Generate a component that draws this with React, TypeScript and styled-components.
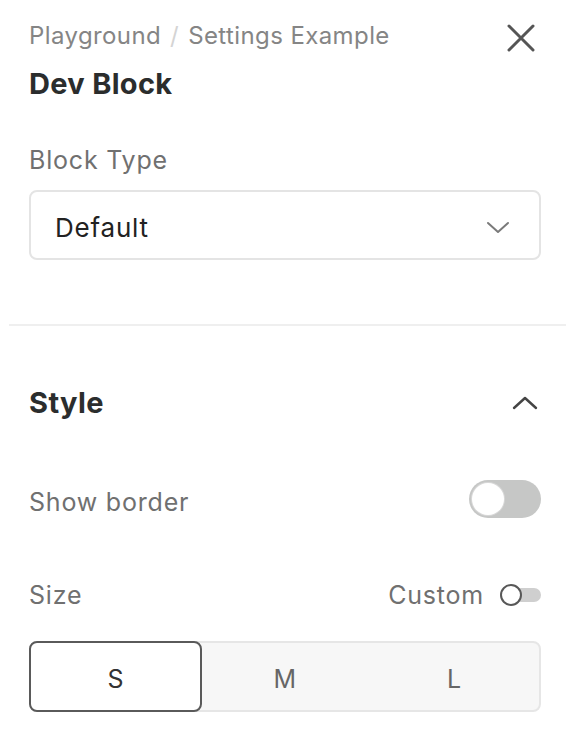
import React from "react";
import styled, { createGlobalStyle } from "styled-components";

const GlobalStyle = createGlobalStyle`
  html, body {
    margin: 0;
    padding: 0;
    background: #ffffff;
  }
  body {
    font-family: Inter, "Noto Sans", "Liberation Sans", sans-serif;
    -webkit-font-smoothing: antialiased;
  }
  * { box-sizing: border-box; }
`;

const Panel = styled.div`
  width: 566px;
  display: flex;
  flex-direction: column;
  padding: 21px 25px 36px 29px;
`;

const Header = styled.div`
  display: flex;
  justify-content: space-between;
  align-items: flex-start;
`;

const Breadcrumb = styled.div`
  display: flex;
  align-items: center;
  font-size: 24px;
  line-height: 30px;
  color: #858585;
  letter-spacing: 0.4px;
`;

const Slash = styled.span`
  color: #d4d4d4;
  margin: 0 9px;
`;

const CloseButton = styled.button`
  border: none;
  background: none;
  padding: 0;
  margin: 2px 5px 0 0;
  width: 30px;
  height: 30px;
  display: flex;
  align-items: center;
  justify-content: center;
  color: #555;
  cursor: pointer;
`;

const Title = styled.h1`
  margin: 14px 0 0;
  font-size: 29px;
  line-height: 34px;
  font-weight: 700;
  color: #2b2d2d;
  letter-spacing: 0.3px;
`;

const Field = styled.div`
  display: flex;
  flex-direction: column;
  margin-top: 44px;
`;

const Label = styled.span`
  font-size: 25px;
  line-height: 30px;
  color: #707070;
  letter-spacing: 0.8px;
`;

const RowLabel = styled(Label)`
  padding-top: 5px;
`;

const Select = styled.div`
  margin-top: 15px;
  height: 70px;
  border: 2px solid #e4e4e4;
  border-radius: 8px;
  display: flex;
  align-items: center;
  justify-content: space-between;
  padding: 5px 29px 0 24px;
  font-size: 26px;
  color: #222;
  letter-spacing: 0.8px;
`;

const Divider = styled.hr`
  border: none;
  height: 2px;
  background: #efefef;
  margin: 64px -25px 0 -20px;
`;

const SectionHeader = styled.div`
  display: flex;
  justify-content: space-between;
  align-items: center;
  margin-top: 60px;
`;

const SectionTitle = styled.h2`
  margin: 0;
  font-size: 29px;
  line-height: 34px;
  font-weight: 700;
  color: #2b2d2d;
  letter-spacing: 0.4px;
`;

const CollapseIcon = styled.span`
  display: flex;
  margin-right: 3px;
`;

const Row = styled.div<{ $gap: number }>`
  display: flex;
  justify-content: space-between;
  align-items: center;
  margin-top: ${(p) => p.$gap}px;
`;

const RowEnd = styled.div`
  display: flex;
  align-items: center;
  gap: 16px;
`;

const Switch = styled.div`
  width: 72px;
  height: 38px;
  border-radius: 19px;
  background: #c6c7c6;
  padding: 3px;
  display: flex;
  align-items: center;
`;

const Knob = styled.div`
  width: 32px;
  height: 32px;
  border-radius: 50%;
  background: #fff;
  box-shadow: 0 0 0 1px #d8d8d8;
`;

const MiniSwitch = styled.div`
  position: relative;
  width: 41px;
  height: 22px;
  display: flex;
  align-items: center;
`;

const MiniTrack = styled.div`
  margin-left: 10px;
  width: 31px;
  height: 14px;
  border-radius: 7px;
  background: #cfcfcf;
`;

const MiniKnob = styled.div`
  position: absolute;
  left: 0;
  top: 0;
  width: 22px;
  height: 22px;
  border-radius: 50%;
  background: #fff;
  border: 2px solid #585858;
`;

const Segmented = styled.div`
  margin-top: 31px;
  height: 71px;
  display: grid;
  grid-template-columns: repeat(3, 1fr);
  border: 2px solid #e6e6e6;
  border-radius: 8px;
  background: #f7f7f7;
`;

const Segment = styled.button<{ $active?: boolean }>`
  font-family: inherit;
  font-size: 25px;
  letter-spacing: 0.5px;
  color: ${(p) => (p.$active ? "#333" : "#666")};
  background: ${(p) => (p.$active ? "#fff" : "transparent")};
  border: ${(p) => (p.$active ? "2px solid #5a5a5a" : "none")};
  border-radius: 8px;
  margin: ${(p) => (p.$active ? "-2px -2px -2px -2px" : "0")};
  padding: 4px 0 0;
  display: flex;
  align-items: center;
  justify-content: center;
  cursor: pointer;
`;

const ChevronDown = () => (
  <svg width="24" height="14" viewBox="0 0 24 14" fill="none">
    <path d="M2 2 L12 11 L22 2" stroke="#7a7a7a" strokeWidth="2" strokeLinecap="round" strokeLinejoin="round" />
  </svg>
);

const ChevronUp = () => (
  <svg width="26" height="16" viewBox="0 0 26 16" fill="none">
    <path d="M2 13 L13 3 L24 13" stroke="#444" strokeWidth="2.4" strokeLinecap="round" strokeLinejoin="round" />
  </svg>
);

const CloseIcon = () => (
  <svg width="30" height="30" viewBox="0 0 30 30" fill="none">
    <path d="M3 3 L27 27 M27 3 L3 27" stroke="#555" strokeWidth="3" strokeLinecap="round" />
  </svg>
);

export default function App() {
  return (
    <>
      <GlobalStyle />
      <Panel>
        <Header>
          <Breadcrumb>
            <span>Playground</span>
            <Slash>/</Slash>
            <span>Settings Example</span>
          </Breadcrumb>
          <CloseButton aria-label="Close">
            <CloseIcon />
          </CloseButton>
        </Header>
        <Title>Dev Block</Title>

        <Field>
          <Label>Block Type</Label>
          <Select>
            <span>Default</span>
            <ChevronDown />
          </Select>
        </Field>

        <Divider />

        <SectionHeader>
          <SectionTitle>Style</SectionTitle>
          <CollapseIcon>
            <ChevronUp />
          </CollapseIcon>
        </SectionHeader>

        <Row $gap={60}>
          <RowLabel>Show border</RowLabel>
          <Switch>
            <Knob />
          </Switch>
        </Row>

        <Row $gap={62}>
          <Label>Size</Label>
          <RowEnd>
            <Label>Custom</Label>
            <MiniSwitch>
              <MiniTrack />
              <MiniKnob />
            </MiniSwitch>
          </RowEnd>
        </Row>

        <Segmented>
          <Segment $active>S</Segment>
          <Segment>M</Segment>
          <Segment>L</Segment>
        </Segmented>
      </Panel>
    </>
  );
}
